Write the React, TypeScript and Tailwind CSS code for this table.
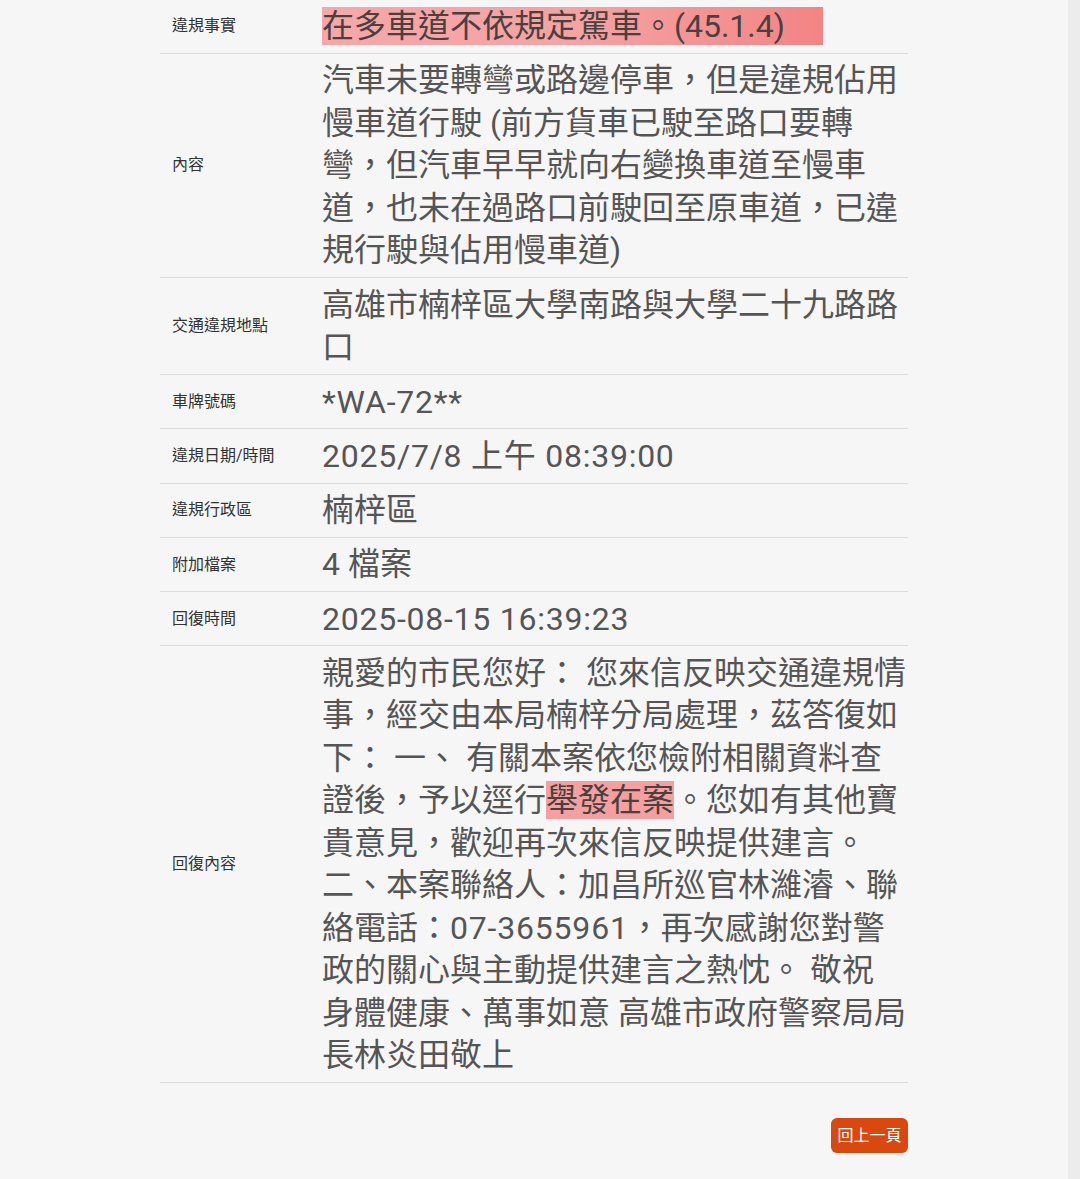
const valueFont = { fontFamily: 'Roboto, "Noto Sans CJK TC", sans-serif' }

type Row = { label: string; value: React.ReactNode; single?: boolean; wide?: boolean }

const rows: Row[] = [
  {
    label: "違規事實",
    value: (
      <span className="bg-gradient-to-r from-[#f6a7a7] via-[#f4a3a3] to-[#f38484] pr-[38px] text-[#4a4040]">
        在多車道不依規定駕車。(45.1.4)
      </span>
    ),
  },
  {
    label: "內容",
    value:
      "汽車未要轉彎或路邊停車，但是違規佔用慢車道行駛 (前方貨車已駛至路口要轉彎，但汽車早早就向右變換車道至慢車道，也未在過路口前駛回至原車道，已違規行駛與佔用慢車道)",
  },
  { label: "交通違規地點", value: "高雄市楠梓區大學南路與大學二十九路路口" },
  { label: "車牌號碼", value: "*WA-72**", single: true, wide: true },
  { label: "違規日期/時間", value: "2025/7/8 上午 08:39:00", single: true, wide: true },
  { label: "違規行政區", value: "楠梓區", single: true },
  { label: "附加檔案", value: "4 檔案", single: true },
  { label: "回復時間", value: "2025-08-15 16:39:23", single: true, wide: true },
  {
    label: "回復內容",
    value: (
      <>
        親愛的市民您好： 您來信反映交通違規情事，經交由本局楠梓分局處理，茲答復如下： 一、 有關本案依您檢附相關資料查證後，予以逕行
        <span className="bg-[#f4a0a0] text-[#4a4040]">舉發在案</span>
        。您如有其他寶貴意見，歡迎再次來信反映提供建言。 二、本案聯絡人：加昌所巡官林濰濬、聯絡電話：
        <span className="tracking-[0.8px]">07-3655961</span>
        ，再次感謝您對警政的關心與主動提供建言之熱忱。 敬祝 身體健康、萬事如意 高雄市政府警察局局長林炎田敬上
      </>
    ),
  },
]

function DetailRow({ row }: { row: Row }) {
  return (
    <div className="flex border-b border-[#dcdcdc]">
      <div
        className="w-[150px] shrink-0 flex items-center pl-3 text-[16px] text-[#333]"
        style={valueFont}
      >
        {row.label}
      </div>
      <div
        className={
          "w-[598px] pl-3 py-[5.5px] text-[32px] leading-[42.5px] text-[#555] " +
          (row.single ? "h-[53.3px] overflow-hidden " : "") +
          (row.wide ? "tracking-[0.75px]" : "")
        }
        style={valueFont}
      >
        {row.value}
      </div>
    </div>
  )
}

export default function App() {
  return (
    <div className="flex h-[1179px] w-[1080px] overflow-hidden bg-[#f6f6f6]">
      <div className="flex-1 pl-[160px]">
        <div className="mt-[-1px] w-[748px]">
          {rows.map((row) => (
            <DetailRow key={row.label} row={row} />
          ))}
        </div>
        <div className="w-[748px] flex justify-end mt-[35px]">
          <button
            className="h-[35px] w-[77px] rounded-md bg-[#d9480f] text-[16px] text-white"
            style={valueFont}
          >
            回上一頁
          </button>
        </div>
      </div>
      <div className="w-[12px] bg-[#ececec]" />
    </div>
  )
}
